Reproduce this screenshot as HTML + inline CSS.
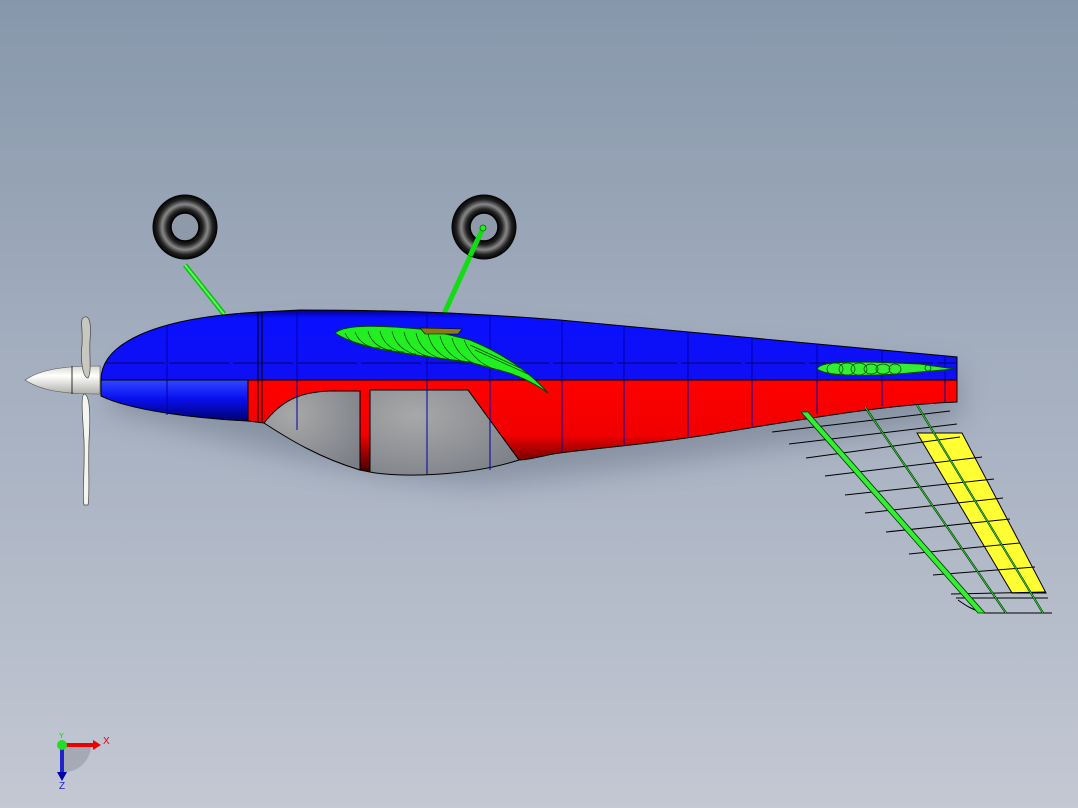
<!DOCTYPE html>
<html><head><meta charset="utf-8"><style>
html,body{margin:0;padding:0;width:1078px;height:808px;overflow:hidden}
body{background:linear-gradient(#8797ab 0%,#a1acbd 40%,#c3c8d3 100%);font-family:"Liberation Sans",sans-serif}
svg{position:absolute;left:0;top:0}
</style></head><body>
<svg width="1078" height="808" viewBox="0 0 1078 808">
<defs>
<linearGradient id="bl" x1="0" y1="0" x2="0" y2="1">
<stop offset="0" stop-color="#00008a"/><stop offset="0.12" stop-color="#0a10ff"/><stop offset="1" stop-color="#0f0ff2"/></linearGradient>
<linearGradient id="bl2" x1="0" y1="0" x2="0" y2="1">
<stop offset="0" stop-color="#3048ff"/><stop offset="0.45" stop-color="#0a10f0"/><stop offset="1" stop-color="#000070"/></linearGradient>
<linearGradient id="rd" x1="0" y1="0" x2="0" y2="1">
<stop offset="0" stop-color="#ff0000"/><stop offset="0.6" stop-color="#f00000"/><stop offset="1" stop-color="#400000"/></linearGradient>
<radialGradient id="gr" cx="0.3" cy="0.3" r="0.9">
<stop offset="0" stop-color="#a8a8a8"/><stop offset="1" stop-color="#7a7e86"/></radialGradient>
<radialGradient id="tire" cx="0.5" cy="0.5" r="0.5">
<stop offset="0.4" stop-color="#000"/><stop offset="0.55" stop-color="#222"/><stop offset="0.7" stop-color="#888"/><stop offset="0.85" stop-color="#222"/><stop offset="1" stop-color="#000"/></radialGradient>
<linearGradient id="sp" x1="0" y1="0" x2="0" y2="1">
<stop offset="0" stop-color="#d8d8d0"/><stop offset="0.35" stop-color="#fff"/><stop offset="1" stop-color="#b0b0a8"/></linearGradient>
<filter id="sh" x="-20%" y="-50%" width="140%" height="200%"><feGaussianBlur stdDeviation="14"/></filter>
</defs>
<path d="M110,390 C150,330 300,325 470,330 L960,370 L960,420 C800,440 650,470 480,485 C350,480 200,430 110,410Z" fill="#4a5466" opacity="0.35" filter="url(#sh)"/>
<line x1="185" y1="265" x2="224" y2="314" stroke="#1b1" stroke-width="5"/>
<line x1="185" y1="265" x2="224" y2="314" stroke="#5f5" stroke-width="2"/>
<line x1="483" y1="228" x2="443" y2="316" stroke="#11dd11" stroke-width="5"/>
<circle cx="185" cy="227" r="32.5" fill="url(#tire)"/>
<circle cx="185" cy="227" r="14" fill="#8e99aa" stroke="#000" stroke-width="1.5"/>
<circle cx="484" cy="227" r="32.5" fill="url(#tire)"/>
<circle cx="484" cy="227" r="14" fill="#8e99aa" stroke="#000" stroke-width="1.5"/>
<line x1="483" y1="228" x2="470" y2="256" stroke="#11dd11" stroke-width="5"/>
<circle cx="483" cy="228" r="3" fill="#2e2" stroke="#060" stroke-width="0.8"/>
<path d="M101,380 C101,345 150,318 260,312 L300,310 C400,310 470,313 560,320 L957,357 L957,380Z" fill="url(#bl)" stroke="#000" stroke-width="1"/>
<path d="M101,380 L248,380 L248,421 C190,418 130,410 101,396Z" fill="url(#bl2)" stroke="#000" stroke-width="1"/>
<path d="M248,380 L957,380 L957,402 C880,405 800,420 700,436 C620,448 570,450 548,455 C535,458 525,460 519,460 L370,472 L360,470 L264,423 L248,421Z" fill="url(#rd)" stroke="#000" stroke-width="1"/>
<path d="M264,423 C282,400 300,392 330,391 L360,391 L360,470 C320,458 290,440 264,423Z" fill="url(#gr)" stroke="#000" stroke-width="1"/>
<path d="M370,390 L468,390 L519,460 C470,476 400,478 370,472Z" fill="url(#gr)" stroke="#000" stroke-width="1"/>
<g stroke="#0000aa" stroke-width="1">
<line x1="167" y1="325" x2="167" y2="415"/><line x1="297" y1="311" x2="297" y2="430"/>
<line x1="427" y1="312" x2="427" y2="474"/><line x1="490" y1="316" x2="490" y2="470"/>
<line x1="562" y1="320" x2="562" y2="452"/><line x1="624" y1="326" x2="624" y2="445"/>
<line x1="688" y1="332" x2="688" y2="437"/><line x1="752" y1="338" x2="752" y2="428"/>
<line x1="817" y1="344" x2="817" y2="414"/><line x1="882" y1="350" x2="882" y2="406"/>
<line x1="945" y1="356" x2="945" y2="402"/>
</g>
<g stroke="#000" stroke-width="1" fill="none">
<line x1="258" y1="312" x2="258" y2="422"/><line x1="262" y1="312" x2="262" y2="422"/>
<line x1="101" y1="380" x2="957" y2="380"/>
<line x1="105" y1="363" x2="957" y2="363" stroke-dasharray="60 4" opacity="0.6"/>
</g>
<path d="M335,333 C345,324 380,325 430,330 L470,340 C500,352 530,372 548,393 C530,380 510,372 490,368 L470,362 C420,356 360,350 335,333Z" fill="#22ee22" stroke="#040" stroke-width="1"/>
<g fill="none" stroke="#040" stroke-width="0.7">
<path d="M345,333 C350,345 365,348 380,348"/><path d="M355,332 C360,346 375,350 392,350"/>
<path d="M368,331 C372,347 388,352 404,352"/><path d="M380,331 C384,348 400,354 416,354"/>
<path d="M392,331 C396,349 412,356 428,356"/><path d="M404,332 C408,350 424,358 440,358"/>
<path d="M416,333 C420,351 436,360 452,360"/><path d="M428,334 C432,352 448,362 464,362"/>
<path d="M440,336 C444,353 460,364 476,364"/><path d="M452,338 C456,354 472,366 488,367"/>
<path d="M464,340 C470,355 484,368 500,370"/><path d="M470,345 L520,368"/><path d="M475,350 L530,375"/>
</g>
<path d="M420,328 L462,329 L458,334 L425,334Z" fill="#8a7a10" stroke="#000" stroke-width="0.6"/>
<path d="M817,369 C820,362 840,362 870,362 L920,364 L955,369 L920,372 C880,376 830,378 817,369Z" fill="#33ee33" stroke="#040" stroke-width="1"/>
<g fill="none" stroke="#040" stroke-width="0.7">
<ellipse cx="835" cy="369" rx="8" ry="6"/><ellipse cx="847" cy="369" rx="8" ry="6"/><ellipse cx="859" cy="369" rx="8" ry="6"/>
<ellipse cx="871" cy="369" rx="7" ry="5"/><ellipse cx="883" cy="369" rx="7" ry="5"/><ellipse cx="895" cy="369" rx="6" ry="5"/><ellipse cx="928" cy="368" rx="3" ry="3"/>
</g>
<polygon points="917,433 962,433 1046,593 1012,593" fill="#ffff33" stroke="#000" stroke-width="1"/>
<g stroke="#000" stroke-width="1">
<line x1="772" y1="432" x2="950" y2="411"/><line x1="789" y1="444" x2="957" y2="424"/>
<line x1="806" y1="458" x2="960" y2="437"/><line x1="825" y1="476" x2="982" y2="457"/>
<line x1="845" y1="495" x2="994" y2="479"/><line x1="865" y1="513" x2="1003" y2="498"/>
<line x1="886" y1="532" x2="1010" y2="519"/><line x1="909" y1="554" x2="1020" y2="543"/>
<line x1="933" y1="575" x2="1035" y2="567"/><line x1="951" y1="594" x2="1046" y2="592"/>
<line x1="956" y1="598" x2="1048" y2="598"/><line x1="985" y1="613" x2="1052" y2="613"/>
<path d="M958,600 C965,605 972,610 985,613" fill="none"/>
</g>
<polygon points="801,412 808,412 985,613 978,613" fill="#33ee33" stroke="#030" stroke-width="0.8"/>
<line x1="865" y1="407" x2="1006" y2="613" stroke="#020" stroke-width="2"/>
<line x1="865" y1="407" x2="1006" y2="613" stroke="#3e3" stroke-width="0.8"/>
<line x1="917" y1="405" x2="1043" y2="613" stroke="#020" stroke-width="2"/>
<line x1="917" y1="405" x2="1043" y2="613" stroke="#3e3" stroke-width="0.8"/>
<path d="M25,380 C40,370 60,366 100,366 L100,394 C60,394 40,390 25,380Z" fill="url(#sp)" stroke="#555" stroke-width="0.6"/>
<line x1="72" y1="366" x2="72" y2="394" stroke="#000" stroke-width="0.8"/>
<path d="M83,318 C88,314 92,320 90,340 C89,355 92,372 88,378 C83,378 80,360 82,345 C83,330 80,320 83,318Z" fill="#c8c8c0" stroke="#444" stroke-width="0.7"/>
<path d="M84,394 C89,394 91,410 89,440 C88,470 90,495 88,505 L84,505 C82,495 85,470 84,440 C82,410 81,396 84,394Z" fill="#f4f4f0" stroke="#444" stroke-width="0.7"/>
<path d="M64,745 L64,772 A27,27 0 0 0 91,745Z" fill="#8a8f99" opacity="0.5"/>
<line x1="62" y1="745" x2="94" y2="745" stroke="#e00" stroke-width="4"/>
<polygon points="93,740 101,745 93,750" fill="#e00"/>
<line x1="62" y1="745" x2="62" y2="773" stroke="#22c" stroke-width="4"/>
<polygon points="57,772 67,772 62,781" fill="#00a"/>
<circle cx="62" cy="745" r="5" fill="#2d2"/>
<text x="103" y="744" font-size="10" fill="#e00">X</text>
<text x="59" y="789" font-size="10" fill="#22c">Z</text>
<text x="59" y="738" font-size="7" fill="#2b2">Y</text>
</svg>
</body></html>
